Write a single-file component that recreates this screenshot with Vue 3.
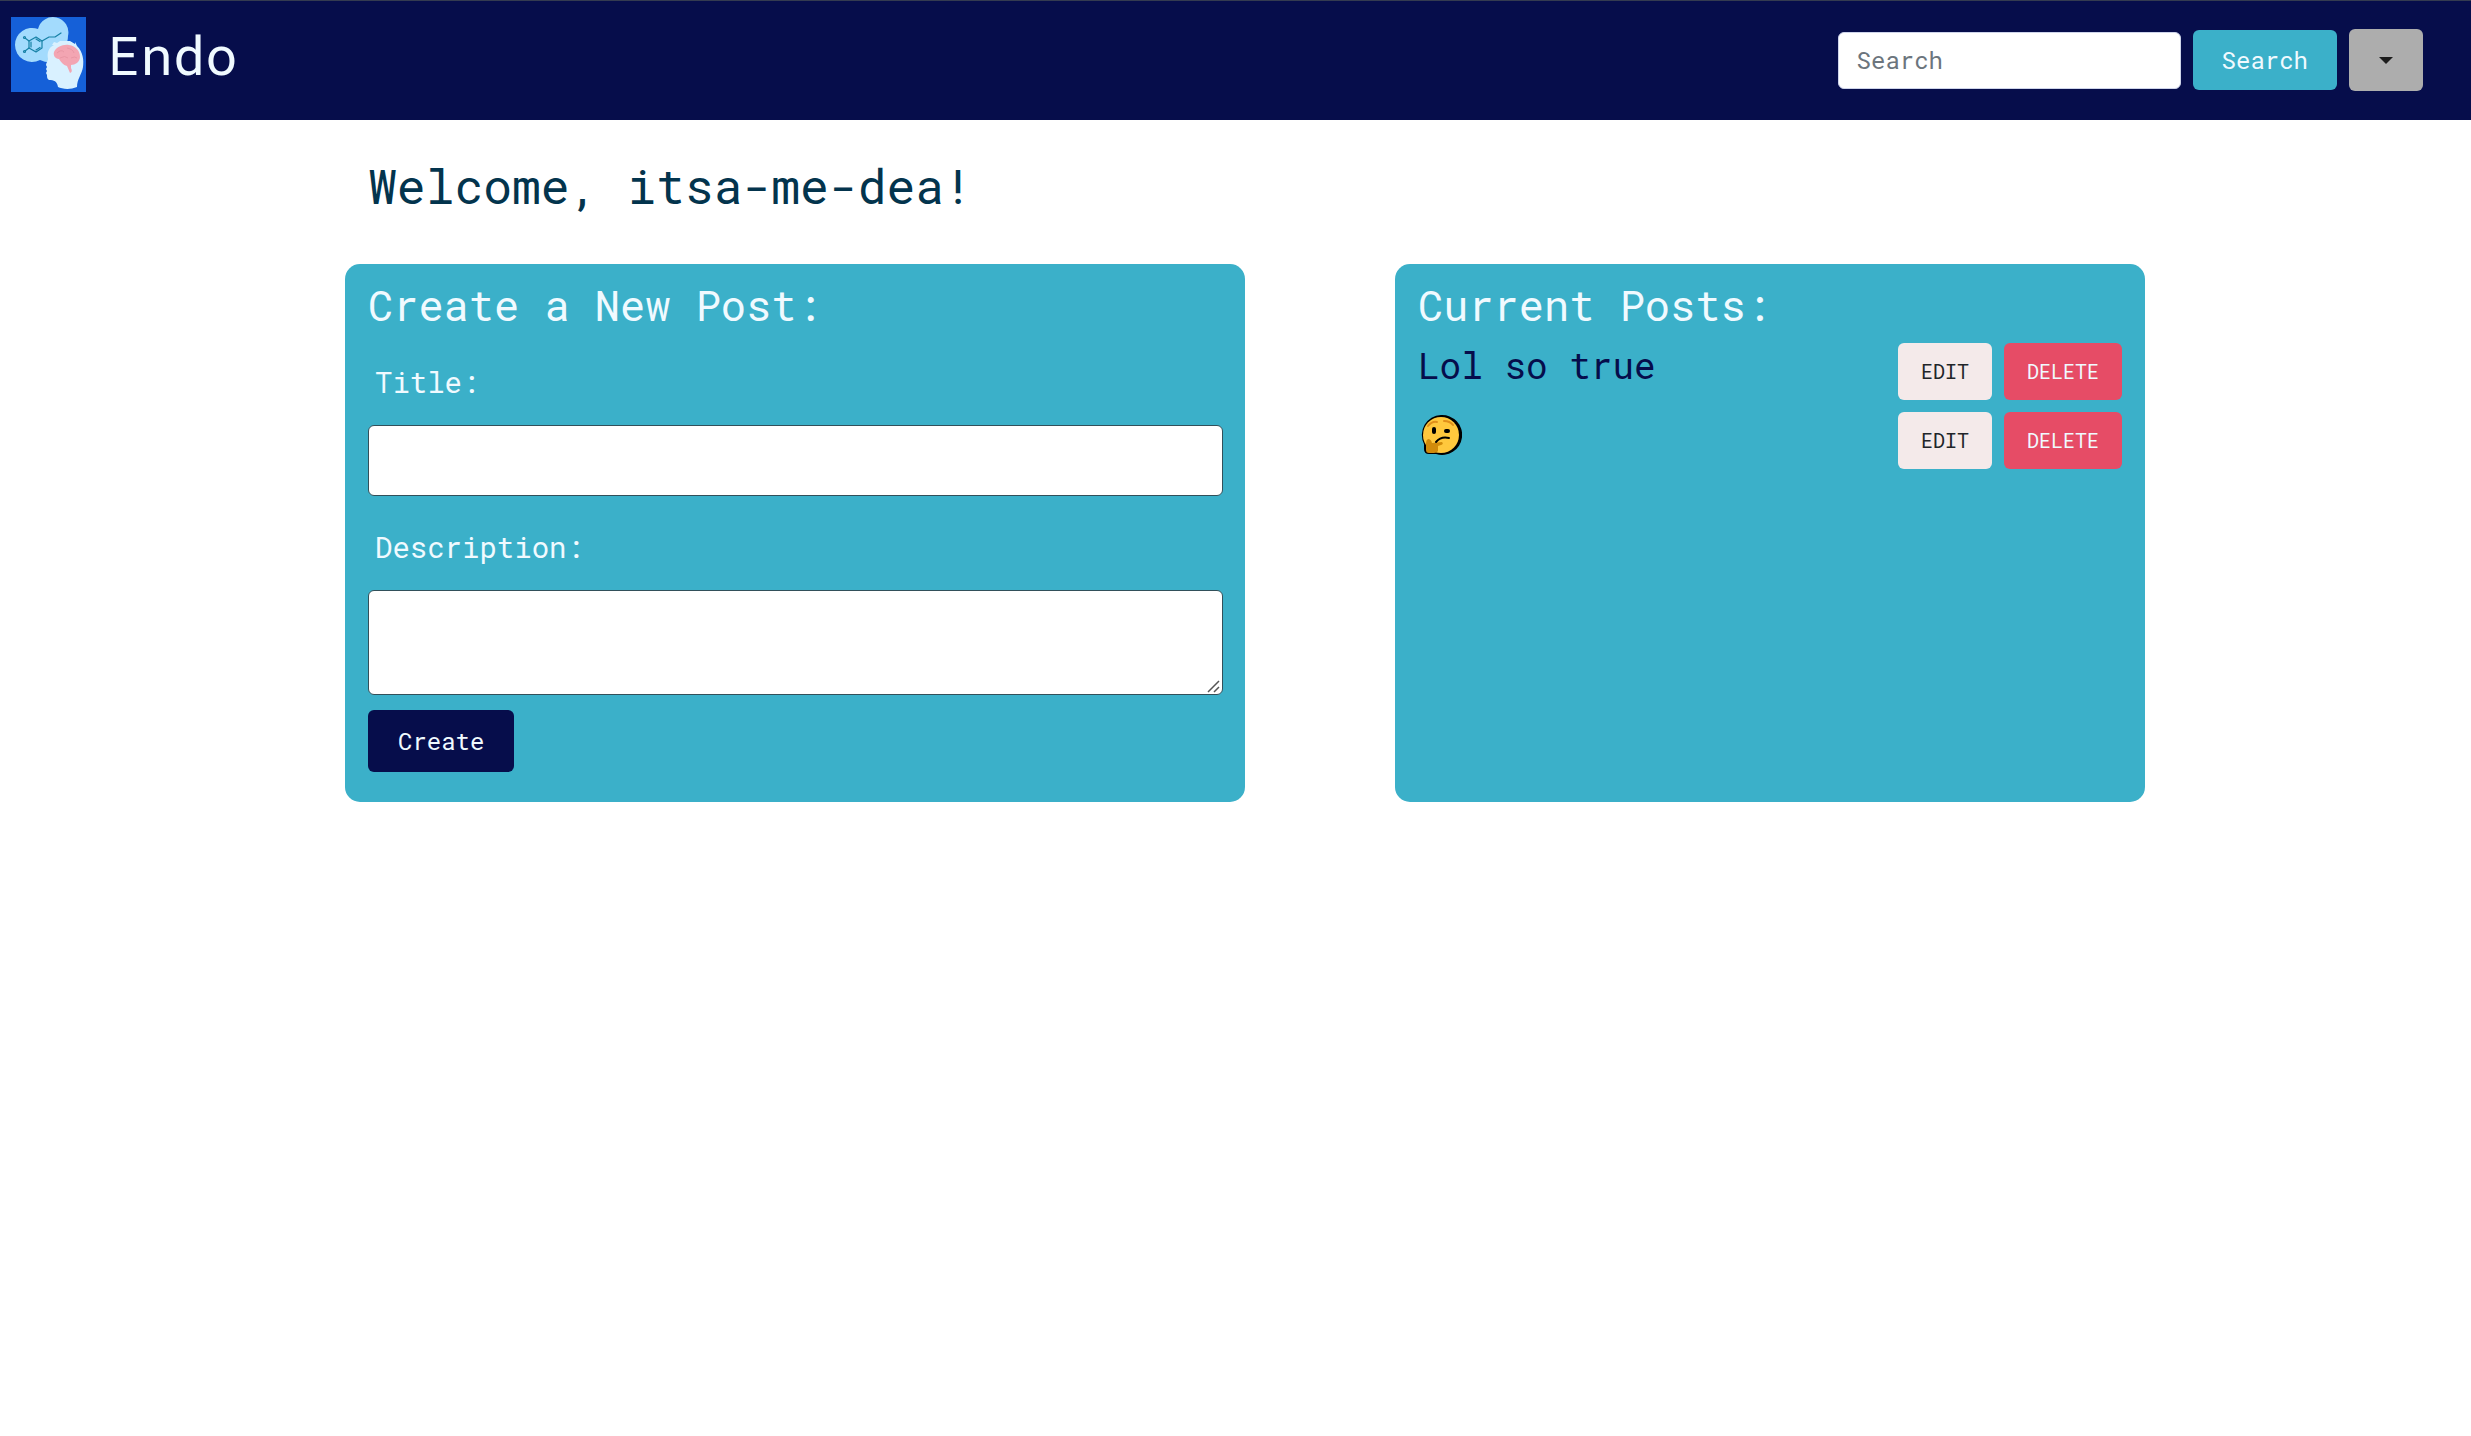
<script setup>
import { ref } from 'vue'

const query = ref('')
const title = ref('')
const description = ref('')
const posts = [
  { id: 1, title: 'Lol so true' },
  { id: 2, title: '', emoji: 'thinking face' },
]
</script>

<template>
  <div class="page">
    <header class="navbar">
      <a class="brand" href="#">
        <svg class="logo" viewBox="0 0 75 75" aria-hidden="true">
          <rect width="75" height="75" fill="#1560d8" />
          <path d="M4 28a17 17 0 0 1 23-16A15 15 0 0 1 57 19q0 7-4 12L48 42Q40 48 29 43A17 17 0 0 1 4 28z" fill="#a3dbfd" />
          <g fill="none" stroke="#1681a6" stroke-width="1.2" stroke-linecap="round" stroke-linejoin="round">
            <path d="M18 24l7-4 6 4v7l-6 4-7-4zM20 25v5M25 22l4 2.500M25 33l4-2.500" />
            <path d="M31 24l7-4h6l6-4M18 24l-4-3M18 31l-4 3" />
            <circle cx="13.500" cy="20.500" r="1" />
            <circle cx="13.500" cy="34.500" r="1" />
          </g>
          <path d="M41 28l2-3 3 1 3-2 10 0 5 3 0-2 2 4c6 6 7 14 6 21-1 7-6 12-6 20-7 3-15 2-19 0-1-6-4-7-9-7-2-1-2-3-2-5l-1-2 1-2-1-2 1-2-1-2c0-2 2-4 2-6-1-6 0-11 6-14z" fill="#d9f1ff" />
          <path d="M43 35c2-5 9-8 15-7 7 1 11 6 11 12 0 5-5 8-9 8l0 3q2 4-1 5l-3-7c-4-1-6-4-8-7-4 0-6-4-5-7z" fill="#f3a5b2" />
          <path d="M46 36q4-4 7-1m3-4q6 1 7 5m-14 5q5-3 8 0m3 0q4-2 6 0" fill="none" stroke="#e997a5" />
        </svg>
        <span class="brand-name">Endo</span>
      </a>
      <form class="search" role="search" @submit.prevent>
        <input v-model="query" class="search-box" type="search" placeholder="Search" aria-label="Search" />
        <button class="btn search-btn" type="submit">Search</button>
        <button class="btn menu-btn" type="button" aria-label="Menu"><span class="caret"></span></button>
      </form>
    </header>

    <main class="container">
      <h1 class="welcome">Welcome, itsa-me-dea!</h1>
      <div class="columns">
        <section class="card create">
          <h2>Create a New Post:</h2>
          <form @submit.prevent>
            <label for="post-title">Title:</label>
            <input id="post-title" v-model="title" class="field" type="text" />
            <label for="post-description">Description:</label>
            <div class="area-wrap">
              <textarea id="post-description" v-model="description" class="field area"></textarea>
              <svg class="grip" viewBox="0 0 14 14" aria-hidden="true">
                <path d="M1 12L12 1M7 12l5-5" fill="none" stroke="#555" stroke-width="1.5" />
              </svg>
            </div>
            <button class="btn create-btn" type="submit">Create</button>
          </form>
        </section>

        <section class="card current">
          <h2>Current Posts:</h2>
          <ul class="posts">
            <li v-for="post in posts" :key="post.id">
              <a class="post-title" href="#">
                {{ post.title }}
                <svg v-if="post.emoji" class="emoji" viewBox="0 0 42 42" role="img" :aria-label="post.emoji">
                  <path d="M21 1a20 20 0 1 1-5 39H9q-5 0-5-5V30A20 20 0 0 1 21 1z" fill="#000" />
                  <circle cx="21" cy="21" r="18" fill="#ffc83d" />
                  <path d="M8 25q3 0 4 4l10-1q2 2-1 3l-3 1v5q-1 2-4 2H9q-3 0-3-3v-7q0-3 2-4z" fill="#d18b0b" />
                  <path d="M8 12q4-5 9-4M24 7q6 0 9 4" fill="none" stroke="#e08f1a" stroke-width="2" stroke-linecap="round" />
                  <rect x="12" y="13" width="4" height="7" rx="2" />
                  <rect x="24" y="15" width="6" height="4" rx="2" />
                  <path d="M16 28q5-6 13-4" fill="none" stroke="#000" stroke-width="2" stroke-linecap="round" />
                </svg>
              </a>
              <div class="actions">
                <button class="btn small edit" type="button">EDIT</button>
                <button class="btn small delete" type="button">DELETE</button>
              </div>
            </li>
          </ul>
        </section>
      </div>
    </main>
  </div>
</template>

<style>
body {
  margin: 0;
  background: #fff;
}
</style>

<style scoped>
* {
  box-sizing: border-box;
}

.page {
  font-family: "Roboto Mono", "DejaVu Sans Mono", monospace;
  color: #f0faff;
}

h1,
h2 {
  margin: 0;
  font-weight: 400;
}

a {
  color: inherit;
  text-decoration: none;
}

.navbar {
  display: flex;
  align-items: center;
  justify-content: space-between;
  height: 120px;
  padding: 0 48px 1px 11px;
  border-top: 1px solid #343b50;
  background: #060d4b;
}

.brand {
  display: flex;
  align-items: center;
  gap: 22px;
  padding-bottom: 11px;
}

.logo {
  width: 75px;
  height: 75px;
}

.brand-name {
  padding-bottom: 2px;
  font-size: 54px;
  line-height: 76px;
}

.search {
  display: flex;
  align-items: center;
  gap: 12px;
}

.btn {
  border: 0;
  border-radius: 6px;
  font-family: inherit;
  font-size: 24px;
  line-height: 36px;
  text-align: center;
  color: #f0faff;
}

.search-box {
  width: 343px;
  height: 57px;
  margin: 0;
  padding: 0 18px;
  border: 1px solid #ced4ea;
  border-radius: 6px;
  background: #fff;
  font-family: inherit;
  font-size: 24px;
  color: #212529;
}

.search-box::placeholder {
  color: #6c757d;
  opacity: 1;
}

.search-btn {
  height: 60px;
  padding: 0 29px;
  background: #3bb0c9;
}

.menu-btn {
  display: flex;
  align-items: center;
  justify-content: center;
  width: 74px;
  height: 62px;
  background: #adadad;
}

.caret {
  border: 7px solid transparent;
  border-top-color: #1c1c1c;
  border-bottom: 0;
}

.container {
  width: calc(100% - 671px);
  min-width: 1200px;
  margin-left: 345px;
  padding-top: 34px;
}

.welcome {
  padding: 0 23px;
  font-size: 48px;
  line-height: 64px;
  color: #03344d;
}

.columns {
  display: grid;
  grid-template-columns: 6fr 5fr;
  column-gap: 150px;
  margin-top: 46px;
}

.card {
  padding: 15px 23px 30px;
  border-radius: 15px;
  background: #3bb0c9;
}

.card h2 {
  font-size: 42px;
  line-height: 52px;
}

.create {
  padding-right: 22px;
}

.create form {
  display: flex;
  flex-direction: column;
  align-items: flex-start;
}

label {
  padding: 31px 7px 23px;
  font-size: 29px;
  line-height: 40px;
}

.field {
  display: block;
  width: 100%;
  height: 71px;
  margin: 0;
  padding: 12px 18px;
  border: 1px solid #32505a;
  border-radius: 6px;
  background: #fff;
  font-family: inherit;
  font-size: 24px;
}

.area-wrap {
  position: relative;
  width: 100%;
}

.area {
  height: 105px;
}

.area::-webkit-resizer {
  background: transparent;
}

.grip {
  position: absolute;
  right: 2px;
  bottom: 1px;
  width: 14px;
  height: 14px;
  pointer-events: none;
}

.create-btn {
  height: 62px;
  margin-top: 15px;
  padding: 0 30px;
  background: #060d4b;
}

.posts {
  display: flex;
  flex-direction: column;
  gap: 12px;
  margin: 12px 0 0;
  padding: 0;
  list-style: none;
}

.posts li {
  display: flex;
  justify-content: space-between;
}

.post-title {
  font-size: 36px;
  line-height: 44px;
  color: #060d4b;
}

.emoji {
  display: block;
  width: 42px;
  height: 42px;
  margin: 2px;
}

.actions {
  display: flex;
  gap: 12px;
}

.small {
  height: 57px;
  padding: 0 23px 2px;
  font-size: 20px;
}

.edit {
  background: #f4eaea;
  color: #212529;
}

.delete {
  background: #e64c66;
}
</style>
